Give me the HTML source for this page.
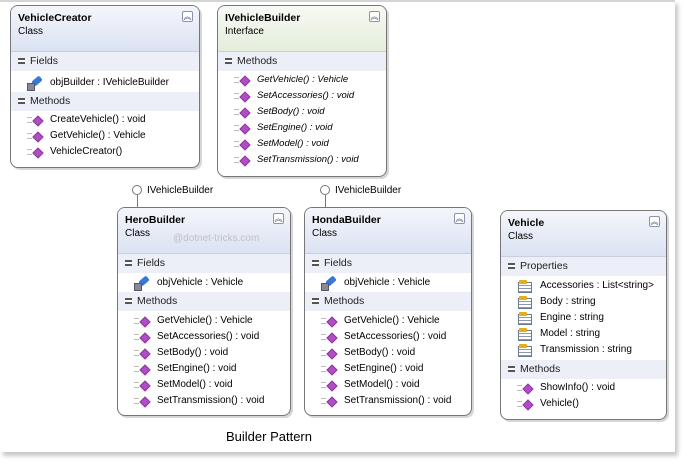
<!DOCTYPE html><html><head><style>
*{margin:0;padding:0;box-sizing:border-box}
body{width:683px;height:463px;background:#fff;font-family:"Liberation Sans",sans-serif;font-size:10px;color:#000;position:relative;overflow:hidden}
.pg{position:absolute;left:0;top:0;width:675px;height:452px;background:#fff;border-top:2px solid #d4d4d4;box-shadow:3px 4px 4px #c8c8c8}
.box{position:absolute;border:1px solid #767676;border-radius:8px;background:#fff;box-shadow:2px 2px 0 #d6d6d6;overflow:hidden}
.hd{height:46px;background:linear-gradient(#f4f6fb,#dbe2f2);padding:6px 0 0 7px;position:relative;border-bottom:1px solid #c9cfdc}
.hd.g{background:linear-gradient(#f7f9f4,#e4eedb)}
.hd b{font-size:10.5px;display:block;height:14px}
.hd .c{position:absolute;right:6px;top:5px;width:11px;height:11px;border:1px solid #8a93a8;border-radius:2px;font-size:8px;line-height:10px;text-align:center;color:#44506a;background:#fff}
.bd{height:19px;background:#eceff7;line-height:19px;padding-left:19px;position:relative;font-size:10.5px;color:#222}
.bd:before{content:"";position:absolute;left:7px;top:6px;width:7px;height:6px;border-top:2px solid #555;border-bottom:2px solid #555;box-sizing:border-box;background:#fff}
.it{height:16px;line-height:16px;padding-left:39px;position:relative;white-space:nowrap}
.m:before{content:"";position:absolute;left:23px;top:5px;width:6px;height:6px;background:#b24cc8;transform:rotate(45deg);border:1px solid #8a3a9a}
.m:after{content:"";position:absolute;left:16px;top:5px;width:5px;height:4px;border-top:1px solid #bbb;border-bottom:1px solid #bbb}
.f:before{content:"";position:absolute;left:21px;top:3px;width:10px;height:6px;background:#3a78d8;transform:rotate(-40deg);border-radius:2px}
.f:after{content:"";position:absolute;left:16px;top:8px;width:6px;height:6px;background:#889;border:1px solid #556}
.p:before{content:"";position:absolute;left:17px;top:4px;width:12px;height:9px;background:repeating-linear-gradient(#fff 0 2px,#8c9ab0 2px 3px);border:1px solid #6e7a8c}
.p:after{content:"";position:absolute;left:18px;top:2px;width:8px;height:4px;background:#e0b020;border-radius:1px}
i{font-style:italic}
.lp{position:absolute;width:10px;height:10px;border:1px solid #777;border-radius:50%;background:#fff}
.ln{position:absolute;width:1px;background:#777;height:12px}
.lt{position:absolute;font-size:10px}
</style></head><body><div class="pg"></div>

<div class="box" style="left:10px;top:5px;width:190px;height:163px">
<div class="hd"><b>VehicleCreator</b>Class<span class="c">︽</span></div>
<div class="bd">Fields</div>
<div style="padding:4px 0 1px"><div class="it f">objBuilder : IVehicleBuilder</div></div>
<div class="bd">Methods</div>
<div style="padding:1px 0"><div class="it m">CreateVehicle() : void</div><div class="it m">GetVehicle() : Vehicle</div><div class="it m">VehicleCreator()</div></div>
</div>

<div class="box" style="left:217px;top:5px;width:170px;height:172px">
<div class="hd g"><b>IVehicleBuilder</b>Interface<span class="c">︽</span></div>
<div class="bd">Methods</div>
<div style="padding:1px 0;font-size:9.5px"><div class="it m"><i>GetVehicle() : Vehicle</i></div><div class="it m"><i>SetAccessories() : void</i></div><div class="it m"><i>SetBody() : void</i></div><div class="it m"><i>SetEngine() : void</i></div><div class="it m"><i>SetModel() : void</i></div><div class="it m"><i>SetTransmission() : void</i></div></div>
</div>

<div class="lp" style="left:132px;top:185px"></div><div class="ln" style="left:137px;top:195px"></div><div class="lt" style="left:147px;top:185px">IVehicleBuilder</div>
<div class="lp" style="left:320px;top:185px"></div><div class="ln" style="left:325px;top:195px"></div><div class="lt" style="left:335px;top:185px">IVehicleBuilder</div>

<div class="box" style="left:117px;top:207px;width:174px;height:209px">
<div class="hd"><b>HeroBuilder</b>Class<span class="c">︽</span><span style="position:absolute;left:55px;top:25px;color:#c0c0c0;font-size:10px">@dotnet-tricks.com</span></div>
<div class="bd">Fields</div>
<div style="padding:2px 0 1px"><div class="it f">objVehicle : Vehicle</div></div>
<div class="bd">Methods</div>
<div style="padding:2px 0"><div class="it m">GetVehicle() : Vehicle</div><div class="it m">SetAccessories() : void</div><div class="it m">SetBody() : void</div><div class="it m">SetEngine() : void</div><div class="it m">SetModel() : void</div><div class="it m">SetTransmission() : void</div></div>
</div>

<div class="box" style="left:304px;top:207px;width:168px;height:209px">
<div class="hd"><b>HondaBuilder</b>Class<span class="c">︽</span></div>
<div class="bd">Fields</div>
<div style="padding:2px 0 1px"><div class="it f">objVehicle : Vehicle</div></div>
<div class="bd">Methods</div>
<div style="padding:2px 0"><div class="it m">GetVehicle() : Vehicle</div><div class="it m">SetAccessories() : void</div><div class="it m">SetBody() : void</div><div class="it m">SetEngine() : void</div><div class="it m">SetModel() : void</div><div class="it m">SetTransmission() : void</div></div>
</div>

<div class="box" style="left:500px;top:210px;width:167px;height:210px">
<div class="hd"><b>Vehicle</b>Class<span class="c">︽</span></div>
<div class="bd">Properties</div>
<div style="padding:2px 0"><div class="it p">Accessories : List&lt;string&gt;</div><div class="it p">Body : string</div><div class="it p">Engine : string</div><div class="it p">Model : string</div><div class="it p">Transmission : string</div></div>
<div class="bd">Methods</div>
<div style="padding:1px 0"><div class="it m">ShowInfo() : void</div><div class="it m">Vehicle()</div></div>
</div>

<div style="position:absolute;left:226px;top:429px;font-size:13px">Builder Pattern</div>
</body></html>
